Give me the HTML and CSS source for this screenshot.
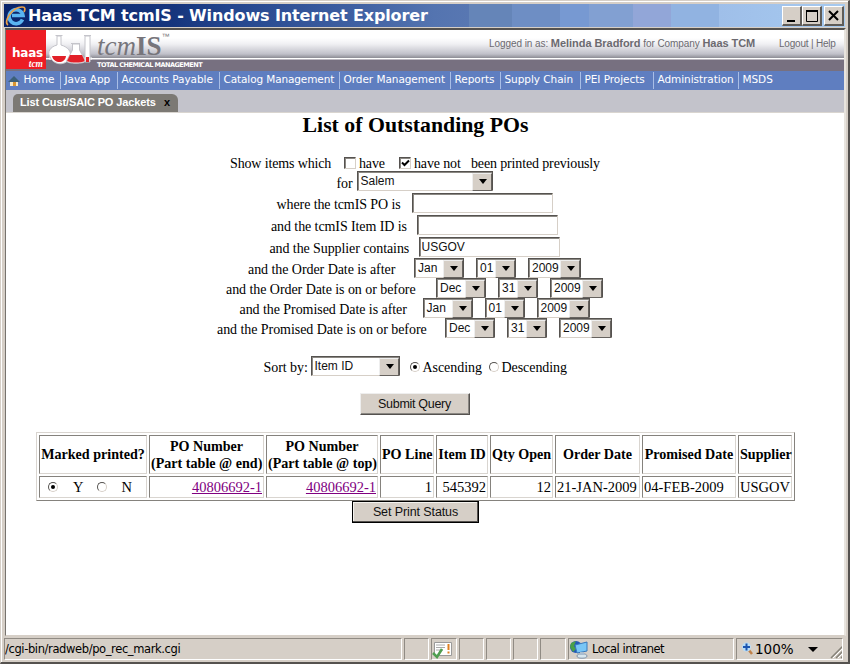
FILE: index.html
```html
<!DOCTYPE html>
<html lang="en">
<head>
<meta charset="utf-8">
<title>Haas TCM tcmIS</title>
<link rel="stylesheet" href="styles.css">
</head>
<body>
<div class="window">
  <header class="titlebar">
    <svg class="ie" width="22" height="22" viewBox="0 0 22 22"><path d="M17.500 14.500A7 7 0 1 1 18 10.500H7" fill="none" stroke="#5ab4f0" stroke-width="3.600"/><path d="M3 20C-2 17 7 2 17 2c4 0 3 3 2 5" fill="none" stroke="#e9a04a" stroke-width="1.700"/></svg>
    <h1>Haas TCM tcmIS - Windows Internet Explorer</h1>
    <div class="winbtns">
      <span class="wb"><svg width="16" height="16"><path d="M3 13h8" stroke="#000" stroke-width="2"/></svg></span>
      <span class="wb"><svg width="16" height="16"><path d="M2.500 3v10.500h11V3" fill="none" stroke="#000"/><path d="M2 3h12" stroke="#000" stroke-width="2"/></svg></span>
      <span class="wb last"><svg width="16" height="16"><path d="M3 3l9 9M12 3l-9 9" stroke="#000" stroke-width="2"/></svg></span>
    </div>
  </header>
  <div class="view">
    <div class="banner">
      <div class="haas"><b>haas</b><i>tcm</i></div>
      <svg class="flasks" width="46" height="36" viewBox="0 0 46 36" fill="#fff" stroke="#c4c4ca">
        <path d="M0 24.500h43" stroke="#fff" stroke-width="2"/>
        <path d="M6.500 1.500h7M8 2v9C1 13-2 18 1 23c4 9 17 9 20 0 2-5-2-10-9-12V2z"/><path d="M3 22h14c-1 8-12 8-14 0z" fill="#e22028" stroke="none"/>
        <path d="M22 9.500h9M23.500 10v6l-6 11c0 3 19 3 19 0l-6-11v-6z"/><path d="M21 21h12l3 6c-5 2-13 2-18 0z" fill="#e22028" stroke="none"/>
        <path d="M35 1.500h7M36 2v26h5V2z"/><path d="M37 23h3v5h-3z" fill="#e22028" stroke="none"/>
      </svg>
      <div class="brand"><div class="word"><i>tcm</i><b>IS</b><sup>™</sup></div><div class="tagline">TOTAL CHEMICAL MANAGEMENT</div></div>
      <div class="login">Logged in as: <b>Melinda Bradford</b> for Company <b>Haas TCM</b></div>
      <div class="links">Logout | Help</div>
    </div>
    <nav class="menu">
      <svg width="12" height="12" viewBox="0 0 12 12"><path d="M2 6h8v5H2z" fill="#f5e9c8"/><path d="M0 7l6-6 6 6z" fill="#3c6078"/><path d="M5 7h3v4H5z" fill="#d99530"/></svg>
      <span>Home</span><span>Java App</span><span>Accounts Payable</span><span>Catalog Management</span><span>Order Management</span><span>Reports</span><span>Supply Chain</span><span>PEI Projects</span><span>Administration</span><span>MSDS</span>
    </nav>
    <div class="tabs"><div class="tab"><span>List Cust/SAIC PO Jackets</span><b>x</b></div></div>
    <main>
      <h2>List of Outstanding POs</h2>
      <form>
        <div class="row first"><span class="t w-show">Show items which</span><i class="cb"></i><span class="t w-have">have</span><i class="cb"><svg width="9" height="9"><path d="M1 3.500l2.500 2.500 4.500-4.500" fill="none" stroke="#000" stroke-width="2"/></svg></i><span class="t w-not">have not</span><span class="t w-been">been printed previously</span></div>
        <div class="row for"><span class="t w-for">for</span><span class="sel s-site">Salem</span></div>
        <div class="row text"><span class="t w-po">where the tcmIS PO is</span><input></div>
        <div class="row text"><span class="t w-item">and the tcmIS Item ID is</span><input></div>
        <div class="row text"><span class="t w-sup">and the Supplier contains</span><input value="USGOV"></div>
        <div class="row date"><span class="t w-oa">and the Order Date is after</span><span class="sel m">Jan</span><span class="sel d">01</span><span class="sel y">2009</span></div>
        <div class="row date"><span class="t w-ob">and the Order Date is on or before</span><span class="sel m">Dec</span><span class="sel d">31</span><span class="sel y">2009</span></div>
        <div class="row date"><span class="t w-pa">and the Promised Date is after</span><span class="sel m">Jan</span><span class="sel d">01</span><span class="sel y">2009</span></div>
        <div class="row date"><span class="t w-pb">and the Promised Date is on or before</span><span class="sel m">Dec</span><span class="sel d">31</span><span class="sel y">2009</span></div>
        <div class="row sort"><span class="t w-sort">Sort by:</span><span class="sel s-sort">Item ID</span><i class="rb on"></i><span class="t w-asc">Ascending</span><i class="rb"></i><span class="t w-desc">Descending</span></div>
        <button type="button" class="submit">Submit Query</button>
      </form>
      <table>
        <colgroup><col class="c1"><col class="c2"><col class="c3"><col class="c4"><col class="c5"><col class="c6"><col class="c7"><col class="c8"><col class="c9"></colgroup>
        <tr class="head"><th>Marked printed?</th><th>PO Number<br>(Part table @ end)</th><th>PO Number<br>(Part table @ top)</th><th>PO Line</th><th>Item ID</th><th>Qty Open</th><th>Order Date</th><th>Promised Date</th><th>Supplier</th></tr>
        <tr class="data"><td><div class="yn"><i class="rb on"></i><span>Y</span><i class="rb"></i><span>N</span></div></td><td class="n"><a href="#">40806692-1</a></td><td class="n"><a href="#">40806692-1</a></td><td class="n">1</td><td class="n">545392</td><td class="n">12</td><td>21-JAN-2009</td><td>04-FEB-2009</td><td>USGOV</td></tr>
      </table>
      <button type="button" class="setprint">Set Print Status</button>
    </main>
  </div>
  <footer class="status">
    <div class="p path">/cgi-bin/radweb/po_rec_mark.cgi</div>
    <div class="p"></div>
    <div class="p"><svg width="20" height="19" viewBox="0 0 20 19"><path d="M2.500 2.500h17v13h-17z" fill="#fff" stroke="#9a9a9a"/><path d="M4 5h9M4 7.500h9M4 10h7" stroke="#aaa"/><path d="M16.500 4v6M16.500 11.500v2" stroke="#e08020" stroke-width="2"/><path d="M1 13l4 4 5-8" fill="none" stroke="#4f9e50" stroke-width="2.500"/></svg></div>
    <div class="p"></div><div class="p"></div><div class="p"></div><div class="p"></div>
    <div class="p zone"><svg width="20" height="19" viewBox="0 0 20 19"><circle cx="7" cy="7" r="6" fill="#2458b8"/><path d="M2 3l5-2-2 5 2 3-3 3-3-5z" fill="#4aa048"/><path d="M6 5l12-3v9l-10 2z" fill="#78c6f6" stroke="#3778bc"/><ellipse cx="13" cy="16" rx="5" ry="2.200" fill="#d7e6ed" stroke="#8194aa"/><path d="M11 12h4v3h-4z" fill="#a9bdd0"/></svg><span>Local intranet</span></div>
    <div class="p zoom"><svg width="14" height="14" viewBox="0 0 14 14"><path d="M7 7l4 5" stroke="#c08048" stroke-width="2.500"/><circle cx="5.500" cy="5" r="4.500" fill="#b9dcf5"/><path d="M5.500 1.500v7M2 5h7" stroke="#1d55b0" stroke-width="2"/></svg><span>100%</span><i class="arrow"></i><svg class="grip" width="14" height="14"><path d="M1 13L13 1M6 13l7-7M11 13l2-2" stroke="#858178" stroke-width="1.500"/><path d="M3 13L13 3M8 13l5-5" stroke="#fff"/></svg></div>
  </footer>
</div>
</body>
</html>
```
FILE: styles.css
```css
* { box-sizing: border-box; }
body { margin: 0; background: #d6cfc7; font-family: "Liberation Serif", serif; color: #000; }
i { font-style: normal; }
svg { display: block; flex: none; }
.window { width: 850px; height: 664px; overflow: hidden; padding: 1px 2px 0 2px; border: 1px solid #d6cfc7; border-right: 2px solid #55524f; border-bottom: 2px solid #55524f; box-shadow: inset 1px 1px #fff; display: flex; flex-direction: column; }

.titlebar { height: 23px; margin: 2px 1px 0; padding-left: 1px; display: flex; align-items: center; background: linear-gradient(90deg, #0a246a, #16357d 170px, #24468e 230px, #3f60a2 350px, #5474b0 430px, #5877b2 465px, #6585b8 465px 508px, #6e8ec4 508px 556px, #7799d2 556px 585px, #82a0d2 585px 629px, #92a6d8 629px 667px, #91b3e1 667px 715px, #9fbfe9 715px, #a6caf0); }
.titlebar h1 { flex: 1; margin: 0 0 0 1px; white-space: nowrap; color: #fff; font: bold 16px/22px "DejaVu Sans", sans-serif; letter-spacing: -.13px; }
.winbtns { display: flex; padding-right: 1px; }
.wb { width: 20px; height: 20px; padding: 1px; background: #d6cfc7; border: 1px solid #fff; border-right: 2px solid #5f5c58; border-bottom: 2px solid #5f5c58; }
.wb.last { margin-left: 2px; }

.view { margin: 1px 0 0 2px; width: 841px; height: 608px; border-left: 1px solid #77736e; border-right: 2px solid #e8e4de; border-top: 2px solid #55524f; border-bottom: 1px solid #d6cfc7; background: #fff; }
.banner { height: 41px; display: flex; background: linear-gradient(#fff 0 8px, #f0f0f3 14px, #c0c0c9 24px, #8c8c94 28px, #fff 28px 29px, #777080 30px); font-family: "Liberation Sans", sans-serif; color: #6c6a70; white-space: nowrap; }
.haas { width: 40px; height: 39px; background: #ed1c24; color: #fff; padding: 17px 3px 0 4px; text-align: right; font: 12px/14px "DejaVu Sans", sans-serif; letter-spacing: -.2px; }
.haas b, .haas i { display: block; }
.haas b { height: 12px; line-height: 12px; }
.haas i { font: italic bold 9.500px/10px "Liberation Serif", serif; letter-spacing: 0; }
.flasks { margin-left: 3px; margin-top: 4px; }
.brand { width: 120px; margin-left: 2px; }
.word { height: 29px; font: 27px/32px "Liberation Serif", serif; color: #77757b; display: flex; }
.word i { font-style: italic; }
.word sup { font: 8px/14px "Liberation Sans", sans-serif; }
.tagline { color: #fff; font: bold 6.500px/12px "DejaVu Sans", sans-serif; letter-spacing: -.5px; }
.login { margin-left: 272px; width: 290px; font-size: 10px; line-height: 27px; letter-spacing: -.07px; }
.login b { font-size: 11px; letter-spacing: -.05px; }
.links { font-size: 10px; line-height: 27px; letter-spacing: -.2px; }
.menu { height: 19px; display: grid; grid-template-columns: 12px 41px 57px 102px 120px 111px 50px 80px 73px 85px 60px; align-items: center; background: #5f7ec0; color: #fff; font: 10.500px/15px "DejaVu Sans", sans-serif; letter-spacing: -.05px; padding-left: 2px; white-space: nowrap; }
.menu span { height: 17px; padding-left: 3.500px; border-right: 1px solid #a9bee6; }
.menu span:nth-of-type(4) { letter-spacing: -.12px; }
.menu span:last-child { border: 0; }
.tabs { height: 23px; background: #c3c3cb; padding: 4px 0 0 7px; border-bottom: 1px solid #d9d5d0; }
.tab { width: 165px; height: 18px; border-radius: 5px 6px 0 0; background: #7c7974; color: #fff; padding-left: 7px; display: flex; font: bold 11px/17px "Liberation Sans", sans-serif; letter-spacing: -.12px; white-space: nowrap; }
.tab span { width: 144px; }
.tab b { color: #000; }

main { width: 819px; display: flex; flex-direction: column; align-items: center; }
h2 { margin: 0; font-size: 21.800px; line-height: 24px; height: 41px; white-space: nowrap; }
form { display: flex; flex-direction: column; align-items: center; margin-right: 2px; }
.row { display: flex; align-items: flex-start; justify-content: center; white-space: nowrap; font-size: 14px; letter-spacing: -.06px; }
.t { line-height: 18px; }
.row.first { height: 18px; letter-spacing: -.14px; } .row.first .t { margin-top: 1px; }
.row.for { height: 21px; gap: 4px; } .row.for .t { margin-top: 3px; }
.row.for .sel { margin-top: -1px; }
.row.text { height: 22px; gap: 11px; }
.row.text .t { margin-top: 3px; letter-spacing: -.09px; }
.row.date { height: 20px; gap: 12px; }
.row.date .t { margin-right: 6px; margin-top: 2px; }
.row.date .sel { margin-top: -1px; }
.row.sort { margin-top: 17px; height: 37px; }
.row.sort .t { margin-top: 3px; }
.w-show { width: 99px; margin-right: 15px; } .w-have { width: 26px; margin-right: 14px; } .w-not { width: 47px; margin-right: 10px; } .w-been { width: 128px; }
.w-for { width: 16px; } .w-po { width: 124px; } .w-item { width: 135px; } .w-sup { width: 138px; }
.w-oa { width: 148px; } .w-ob { width: 192px; } .w-pa { width: 165px; } .w-pb { width: 210px; }
.w-sort { width: 43px; margin-right: 4px; } .w-asc { width: 58px; margin-right: 8px; } .w-desc { width: 64px; }
.cb { width: 12px; height: 12px; margin: 3px 3px 0 0; border: 1px solid; border-color: #55524f #d6cfc7 #d6cfc7 #55524f; box-shadow: inset 1px 1px #8b8883; padding: 1px; }
.rb { flex: none; width: 10px; height: 10px; border-radius: 50%; border: 1px solid; border-color: #55524f #d6cfc7 #d6cfc7 #55524f; margin: 6px 3px 0 0; display: grid; place-items: center; }
.rb.on::after { content: ""; width: 4px; height: 4px; border-radius: 50%; background: #000; }
.sel, input { height: 20px; border: 1px solid; border-color: #55524f #d6cfc7 #d6cfc7 #55524f; box-shadow: inset 1px 1px #8b8883; font: 12px/17px "Liberation Sans", sans-serif; color: #111; background: #fff; }
.sel { position: relative; padding-left: 3px; line-height: 19px; letter-spacing: 0; border-right-color: #55524f; }
.sel::before { content: ""; position: absolute; right: 0; top: 1px; width: 18px; height: 16px; background: #d6cfc7; border: 1px solid; border-color: #eee #66625e #66625e #eee; }
.sel::after { content: ""; position: absolute; right: 5px; top: 7px; border: 4px solid transparent; border-top: 5px solid #000; border-bottom: 0; }
input { width: 141px; padding: 0 2px; outline: 0; }
.s-site { width: 136px; } .s-sort { width: 89px; margin-right: 10px; } .m { width: 50px; } .d { width: 40px; } .y { width: 53px; }
button { font: 12.500px/17px "Liberation Sans", sans-serif; letter-spacing: -.1px; color: #111; background: #d6cfc7; padding: 0; white-space: nowrap; }
.submit { width: 110px; height: 22px; border: 1px solid; border-color: #eee #55524f #55524f #eee; box-shadow: inset -1px -1px #8b8883; letter-spacing: -.3px; }
.setprint { width: 127px; height: 22px; border: 1px solid #000; box-shadow: inset -1px -1px #55524f, inset 1px 1px #f4f2ee; }

table { margin-top: 17px; table-layout: fixed; width: 759px; border: 1px solid; border-color: #d9d5d0 #85827d #85827d #d9d5d0; border-spacing: 2px; font-size: 14.500px; line-height: 17px; }
th, td { border: 1px solid; border-color: #85827d #d9d5d0 #d9d5d0 #85827d; padding: 0 1px; white-space: nowrap; }
th { font-size: 14.100px; }
td { line-height: 18px; height: 22px; padding-bottom: 1px; }
.head { height: 39px; }
.n { text-align: right; }
.c1 { width: 108px; } .c2 { width: 115px; } .c3 { width: 112px; } .c4 { width: 54px; } .c5 { width: 52px; } .c6 { width: 63px; } .c7 { width: 85px; } .c8 { width: 94px; } .c9 { width: 54px; }
a { color: #800080; }
.yn { display: flex; align-items: center; padding-left: 7px; }
.yn .rb { margin: 0 15px 0 0; }
.yn span { width: 25px; }

.status { flex: 1; margin: 2px 1px 1px; display: grid; grid-template-columns: 398px 25px 26px 25px 25px 25px 26px 166px 107px; gap: 2px; font: 11.500px/19px "DejaVu Sans", sans-serif; white-space: nowrap; }
.p { display: flex; align-items: center; height: 22px; border: 1px solid; border-color: #908b84 #fff #fff #908b84; overflow: hidden; }
.path { letter-spacing: -.38px; }
.zone { gap: 3px; letter-spacing: -.5px; }
.zoom { padding-left: 4px; font-size: 13.500px; }
.arrow { border: 5px solid transparent; border-top-color: #000; border-bottom: 0; margin-left: 14px; }
.grip { margin: 6px 0 0 12px; }
```
